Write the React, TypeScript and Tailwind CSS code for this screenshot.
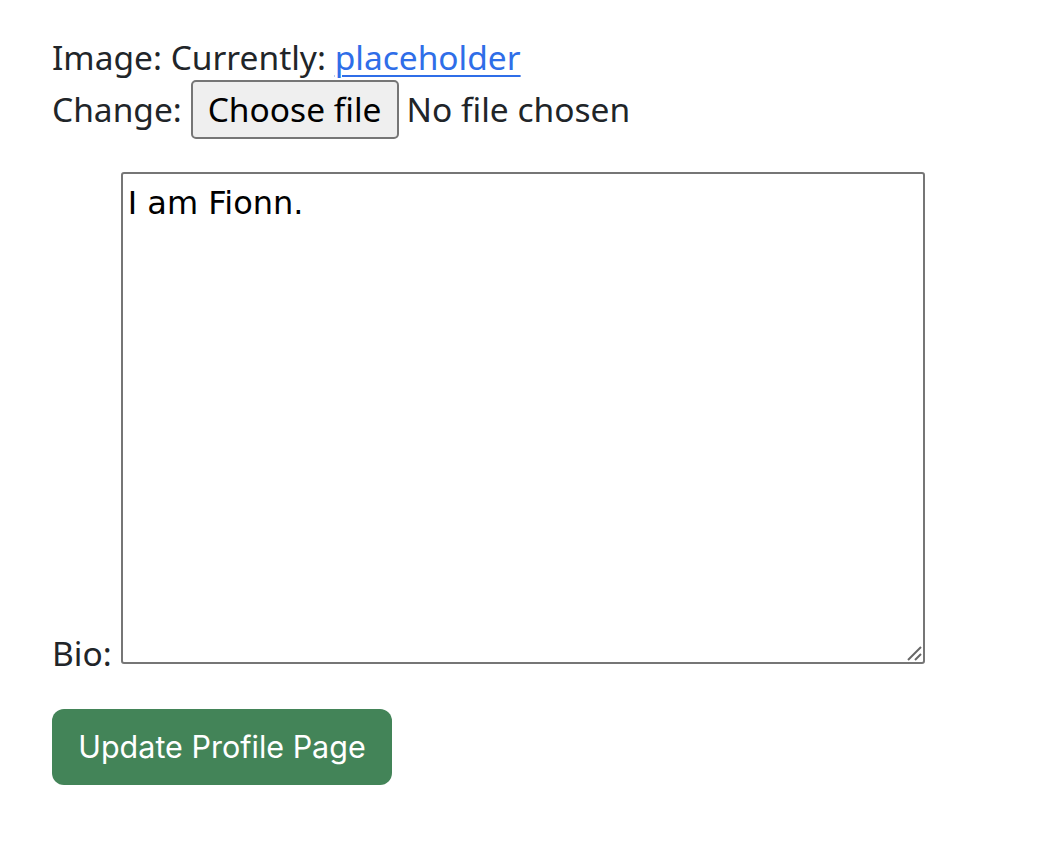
import React from "react";

export default function App() {
  return (
    <div className="min-h-[866px] w-[1042px] bg-white px-[52px] pt-[33px] text-[#212529]">
      <form className="font-['Noto_Sans',sans-serif] text-[33.5px] leading-[52px]">
        <div className="flex items-center h-[48px]">
          <span>Image: Currently:&nbsp;</span>
          <a href="#" className="text-[#2f6ee8] underline underline-offset-[5px] decoration-[2px]">placeholder</a>
        </div>
        <div className="flex items-center h-[60px] mt-[-2px]">
          <span>Change:&nbsp;</span>
          <span className="inline-flex h-[59px] w-[208px] items-center justify-center rounded-[5px] border-2 border-[#767676] bg-[#efefef] text-black">Choose file</span>
          <span className="ml-[8px]">No file chosen</span>
        </div>
        <div className="mt-[33px] flex items-end">
          <span className="leading-[30px] mb-[-4px] mr-[9px]">Bio:</span>
          <div className="relative">
            <textarea
              defaultValue="I am Fionn."
              className="block h-[492px] w-[804px] resize-none rounded-[3px] border-2 border-[#767676] px-[5px] pt-[10px] pb-[6px] font-['DejaVu_Sans',sans-serif] text-[32px] leading-[38px] text-black outline-none"
            />
            <svg className="absolute right-[3px] bottom-[3px]" width="16" height="16" viewBox="0 0 16 16">
              <line x1="2" y1="15" x2="15" y2="2" stroke="#666" strokeWidth="2" />
              <line x1="9" y1="15" x2="15" y2="9" stroke="#666" strokeWidth="2" />
            </svg>
          </div>
        </div>
        <button
          type="button"
          className="mt-[45px] flex h-[76px] w-[340px] items-center justify-center rounded-[12px] bg-[#438458] font-['Inter',sans-serif] text-[30.5px] text-white"
        >
          Update Profile Page
        </button>
      </form>
    </div>
  );
}
